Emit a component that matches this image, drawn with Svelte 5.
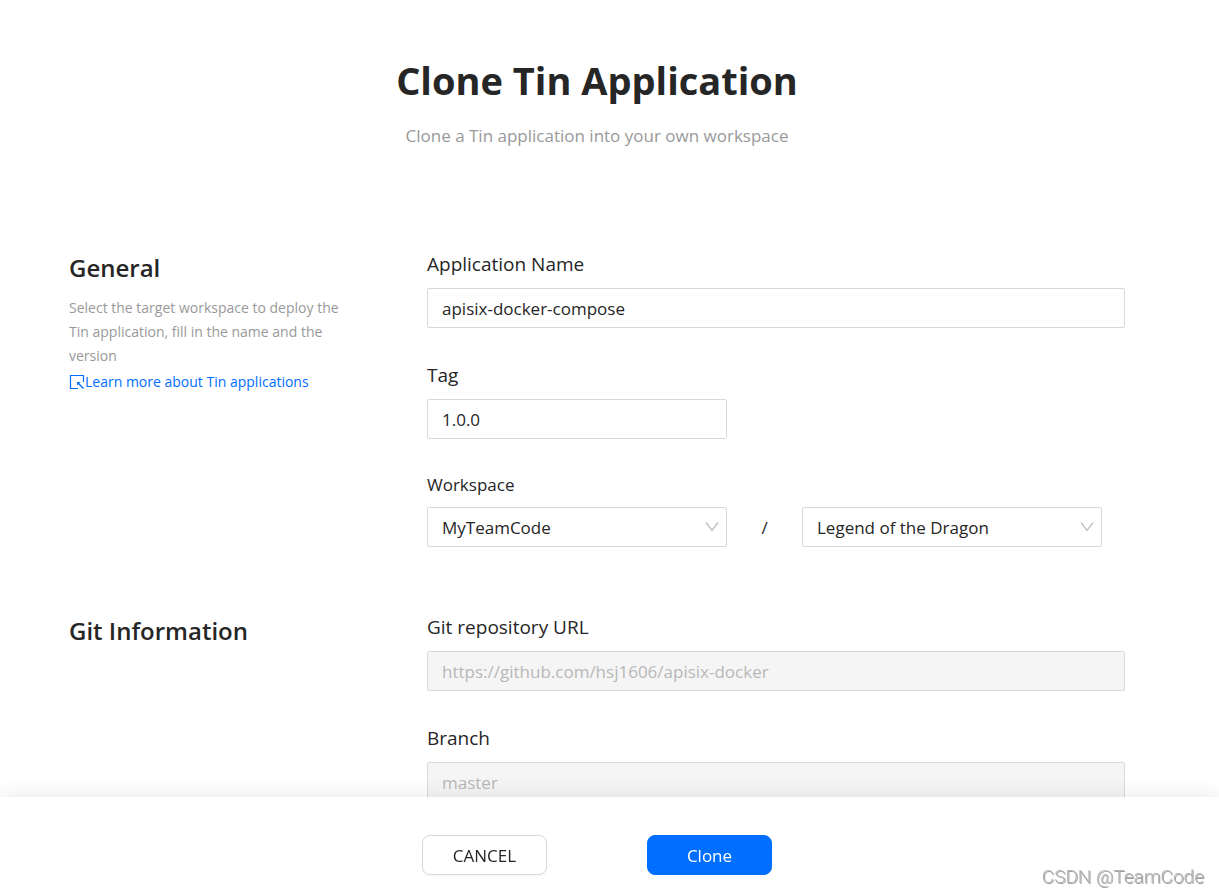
<script lang="ts">
	let name = $state('apisix-docker-compose');
	let tag = $state('1.0.0');
	let team = $state('MyTeamCode');
	let project = $state('Legend of the Dragon');

	const repository = 'https://github.com/hsj1606/apisix-docker';
	const branch = 'master';
</script>

{#snippet chevron()}
	<svg class="chevron" width="14" height="10" viewBox="0 0 14 10" fill="none" stroke="currentColor" aria-hidden="true">
		<path d="M1 0.5 7 8.5 13 0.5" stroke-width="1.3" />
	</svg>
{/snippet}

<div class="page">
	<header class="page-header">
		<h1>Clone Tin Application</h1>
		<p>Clone a Tin application into your own workspace</p>
	</header>

	<main>
		<section class="section">
			<div class="info">
				<h2>General</h2>
				<p>Select the target workspace to deploy the Tin application, fill in the name and the version</p>
				<a href="#learn-more">
					<svg width="16" height="16" viewBox="0 0 16 16" fill="none" stroke="currentColor" aria-hidden="true">
						<path d="M9 14.5H1.5V1.5H14.5V8" stroke-width="1.2" />
						<path d="M9.5 9.5 14.5 14.5" stroke-width="1.4" />
						<path d="M8 8h3.6L8 11.6z" fill="currentColor" stroke="none" />
					</svg>Learn more about Tin applications</a>
			</div>

			<div class="fields">
				<div class="field">
					<label for="app-name">Application Name</label>
					<input id="app-name" type="text" bind:value={name} />
				</div>
				<div class="field">
					<label for="tag">Tag</label>
					<input id="tag" class="short" type="text" bind:value={tag} />
				</div>
				<div class="field">
					<label for="team" class="small">Workspace</label>
					<div class="workspace">
						<div class="select">
							<select id="team" bind:value={team}>
								<option>MyTeamCode</option>
							</select>
							{@render chevron()}
						</div>
						<span class="slash">/</span>
						<div class="select">
							<select aria-label="Project" bind:value={project}>
								<option>Legend of the Dragon</option>
							</select>
							{@render chevron()}
						</div>
					</div>
				</div>
			</div>
		</section>

		<section class="section">
			<div class="info">
				<h2>Git Information</h2>
			</div>

			<div class="fields">
				<div class="field">
					<label for="repository">Git repository URL</label>
					<input id="repository" type="text" value={repository} disabled />
				</div>
				<div class="field">
					<label for="branch">Branch</label>
					<input id="branch" type="text" value={branch} disabled />
				</div>
			</div>
		</section>
	</main>

	<footer class="actions">
		<button type="button" class="btn">CANCEL</button>
		<button type="button" class="btn btn-primary">Clone</button>
	</footer>

	<div class="credit">CSDN @TeamCode</div>
</div>

<style>
	:global(body) {
		background: #fff;
	}

	.page {
		box-sizing: border-box;
		padding: 48px 94px 80px 69px;
		font-family: 'Segoe UI', 'Open Sans', 'Noto Sans', sans-serif;
		font-size: 17px;
		color: #262626;
	}

	h1,
	h2,
	p {
		margin: 0;
	}

	.page-header {
		margin-bottom: 80px;
		text-align: center;
	}

	h1 {
		font-size: 38px;
		line-height: 64px;
		font-weight: 700;
	}

	.page-header p {
		line-height: 48px;
		color: #999;
	}

	main {
		display: flex;
		flex-direction: column;
		gap: 56px;
	}

	.section {
		display: grid;
		grid-template-columns: 285px minmax(0, 1fr);
		column-gap: 73px;
	}

	h2 {
		font-size: 24px;
		line-height: 56px;
		font-weight: 600;
	}

	.info p {
		font-size: 14px;
		line-height: 24px;
		color: #999;
	}

	.info a {
		display: flex;
		align-items: center;
		font-size: 14px;
		line-height: 28px;
		color: #006eff;
		text-decoration: none;
	}

	.fields {
		display: flex;
		flex-direction: column;
		gap: 23px;
	}

	label {
		display: block;
		font-size: 19px;
		line-height: 48px;
	}

	label.small {
		font-size: 17px;
		line-height: 45px;
	}

	input,
	select {
		display: block;
		box-sizing: border-box;
		width: 100%;
		height: 40px;
		margin: 0;
		padding: 0 14px;
		border: 1px solid #d9d9d9;
		border-radius: 2px;
		background: #fff;
		font: inherit;
		color: inherit;
		outline: none;
	}

	input:disabled {
		background: #f5f5f5;
		color: #b8b8b8;
	}

	.short,
	.select {
		width: 300px;
	}

	.workspace {
		display: flex;
		align-items: center;
	}

	.select {
		position: relative;
	}

	select {
		appearance: none;
	}

	.chevron {
		position: absolute;
		top: 15px;
		right: 8px;
		color: #bfbfbf;
		pointer-events: none;
	}

	.slash {
		width: 75px;
		text-align: center;
	}

	.actions {
		position: fixed;
		right: 0;
		bottom: 0;
		left: 0;
		display: flex;
		justify-content: center;
		gap: 100px;
		padding: 38px 25px 19px 0;
		background: #fff;
		box-shadow: 0 0 20px rgba(0, 0, 0, 0.1);
	}

	.btn {
		width: 125px;
		height: 40px;
		padding: 0;
		border: 1px solid #d9d9d9;
		border-radius: 8px;
		background: #fff;
		box-shadow: 0 2px 0 rgba(0, 0, 0, 0.02);
		font: inherit;
		color: inherit;
		cursor: pointer;
	}

	.btn-primary {
		border-color: #006eff;
		background: #006eff;
		color: #fff;
	}

	.credit {
		position: fixed;
		right: 15px;
		bottom: 6px;
		font-family: Roboto, 'Liberation Sans', sans-serif;
		font-size: 19px;
		font-weight: 300;
		line-height: 22px;
		color: #b4b4b4;
		text-shadow: 1px 1px 0 #a0a0a0;
	}
</style>
